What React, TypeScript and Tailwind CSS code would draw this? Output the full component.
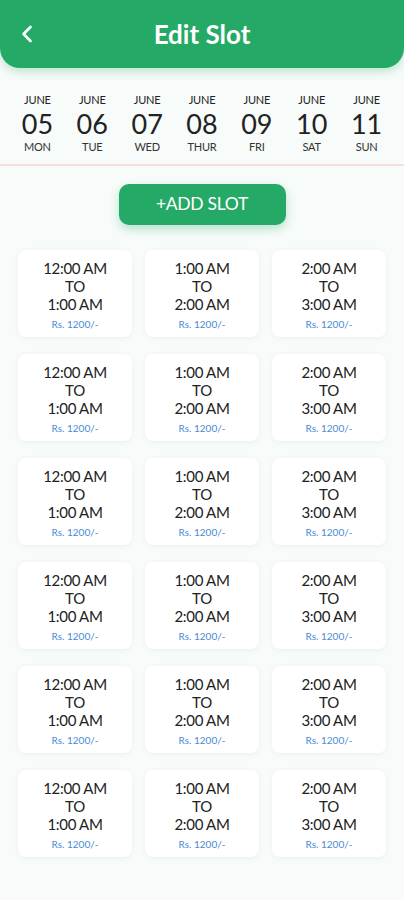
import { ChevronLeft } from "lucide-react";

const days = [
  { d: "05", w: "MON" },
  { d: "06", w: "TUE" },
  { d: "07", w: "WED" },
  { d: "08", w: "THUR" },
  { d: "09", w: "FRI" },
  { d: "10", w: "SAT" },
  { d: "11", w: "SUN" },
];

const slots = [
  { from: "12:00 AM", to: "1:00 AM" },
  { from: "1:00 AM", to: "2:00 AM" },
  { from: "2:00 AM", to: "3:00 AM" },
];

function SlotCard({ from, to }: { from: string; to: string }) {
  return (
    <div className="flex h-[87px] flex-col items-center justify-center rounded-lg bg-white pt-0.5 shadow-[0_1px_6px_rgba(0,0,0,0.05)]">
      <div className="text-[15px] leading-[18px] tracking-[-0.3px] text-[#222]">{from}</div>
      <div className="text-[15px] leading-[18px] tracking-[-0.3px] text-[#222]">TO</div>
      <div className="text-[15px] leading-[18px] tracking-[-0.3px] text-[#222]">{to}</div>
      <div className="mt-1 text-[10px] leading-[14px] text-[#4a8ad4]">Rs. 1200/-</div>
    </div>
  );
}

export default function App() {
  return (
    <div className="min-h-[900px] w-[404px] bg-[#f7fbf9] font-['Lato','Noto_Sans',sans-serif]">
      <header className="relative flex h-[68px] items-center justify-center rounded-b-[20px] bg-[#24a966] shadow-[0_4px_8px_rgba(36,169,102,0.25)]">
        <ChevronLeft className="absolute left-[13px] top-[20px] size-[28px] text-white" strokeWidth={2.3} />
        <h1 className="text-[26px] font-bold text-white">Edit Slot</h1>
      </header>

      <div className="grid grid-cols-7 px-[10px] pt-[25px] pb-[10px]">
        {days.map((x) => (
          <div key={x.d} className="flex flex-col items-center text-[#222]">
            <span className="text-[11px] leading-[14px] tracking-[-0.2px]">JUNE</span>
            <span className="text-[27px] leading-[33px]">{x.d}</span>
            <span className="text-[11px] leading-[14px] tracking-[-0.2px] text-[#333]">{x.w}</span>
          </div>
        ))}
      </div>
      <div className="h-[2px] bg-[#f5dfdb]" />

      <div className="flex justify-center pt-[18px]">
        <button className="h-[41px] w-[167px] rounded-[10px] bg-[#24a966] text-[17.5px] tracking-[-0.3px] text-white shadow-[0_4px_10px_rgba(36,169,102,0.3)]">
          +ADD SLOT
        </button>
      </div>

      <div className="grid grid-cols-3 gap-x-[13px] gap-y-[17px] px-[18px] pt-[25px] pb-8">
        {Array.from({ length: 6 }).flatMap((_, r) =>
          slots.map((s, i) => <SlotCard key={`${r}-${i}`} from={s.from} to={s.to} />)
        )}
      </div>
    </div>
  );
}
